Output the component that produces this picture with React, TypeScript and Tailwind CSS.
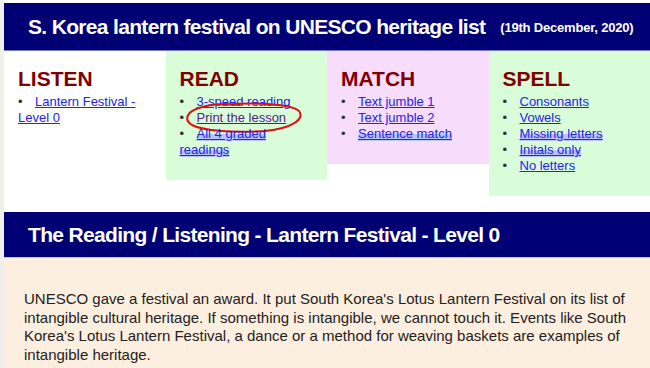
const columns = [
  {
    title: "LISTEN",
    bg: "bg-white",
    links: [{ label: "Lantern Festival - Level 0" }],
  },
  {
    title: "READ",
    bg: "bg-[#d9fcd9]",
    links: [
      { label: "3-speed reading" },
      { label: "Print the lesson", visited: true, circled: true },
      { label: "All 4 graded readings", marked: true },
    ],
  },
  {
    title: "MATCH",
    bg: "bg-[#f8dcfc]",
    links: [
      { label: "Text jumble 1" },
      { label: "Text jumble 2" },
      { label: "Sentence match", marked: true },
    ],
  },
  {
    title: "SPELL",
    bg: "bg-[#d9fcd9]",
    links: [
      { label: "Consonants" },
      { label: "Vowels" },
      { label: "Missing letters", marked: true },
      { label: "Initals only", marked: true },
      { label: "No letters" },
    ],
  },
];

type LinkItem = { label: string; visited?: boolean; circled?: boolean; marked?: boolean };

const ListLink = ({ link }: { link: LinkItem }) => (
  <li className="relative">
    <span className="inline-block w-[17px] text-[#333]">•</span>
    <a
      href="#"
      className={`underline ${link.visited ? "text-[#551a8b]" : "text-[#2323f0]"} ${
        link.marked ? "bg-[linear-gradient(transparent_55%,#b9c3f5_55%)] [box-decoration-break:clone]" : ""
      }`}
    >
      {link.label}
    </a>
    {link.circled && (
      <svg
        className="pointer-events-none absolute left-[3px] top-[-9px]"
        width="122"
        height="34"
        viewBox="0 0 122 34"
        fill="none"
      >
        {/* hand-drawn annotation */}
        <path
          d="M40 4 C72 1 108 3 116 10 C122 18 110 27 82 30 C52 32 20 30 9 24 C1 19 3 11 16 7 C28 3 42 2 56 4"
          stroke="#e01010"
          strokeWidth="2"
          strokeLinecap="round"
        />
      </svg>
    )}
  </li>
);

export default function App() {
  return (
    <div className="min-h-screen bg-[#f0f0ea] pl-1 font-['Liberation_Sans',Arial,sans-serif]">
      <div className="bg-white pt-[3px]">
        <div className="flex h-[48px] items-center border-b border-[#7a7ac4] bg-[#000074] pl-6 text-white">
          <h1 className="text-[21px] font-bold tracking-[-0.67px]">
            S. Korea lantern festival on UNESCO heritage list
          </h1>
          <span className="ml-[15px] mt-[3px] text-[13px] font-bold tracking-[-0.2px]">
            (19th December, 2020)
          </span>
        </div>

        <div className="grid grid-cols-4 items-start">
          {columns.map((col) => (
            <div key={col.title} className={`${col.bg} px-[14px] pb-[22px] pt-[16px]`}>
              <h2 className="text-[21px] font-bold leading-[24px] text-[#800000]">
                {col.title}
              </h2>
              <ul className="mt-[3px] text-[13px] leading-[16px]">
                {col.links.map((link) => (
                  <ListLink key={link.label} link={link} />
                ))}
              </ul>
            </div>
          ))}
        </div>

        <div className="mt-4 flex h-[46px] items-center border-b border-[#c8b8e8] bg-[#000074] pl-6 text-white">
          <h2 className="text-[21px] font-bold tracking-[-0.67px]">
            The Reading / Listening - Lantern Festival - Level 0
          </h2>
        </div>

        <div className="bg-[#fdefdf] px-5 pb-6 pt-[32px]">
          <p className="text-[15px] leading-[18.7px] text-[#222]">
            UNESCO gave a festival an award. It put South Korea's Lotus Lantern Festival on its list of
            intangible cultural heritage. If something is intangible, we cannot touch it. Events like
            South Korea's Lotus Lantern Festival, a dance or a method for weaving baskets are examples
            of intangible heritage.
          </p>
        </div>
      </div>
    </div>
  );
}
